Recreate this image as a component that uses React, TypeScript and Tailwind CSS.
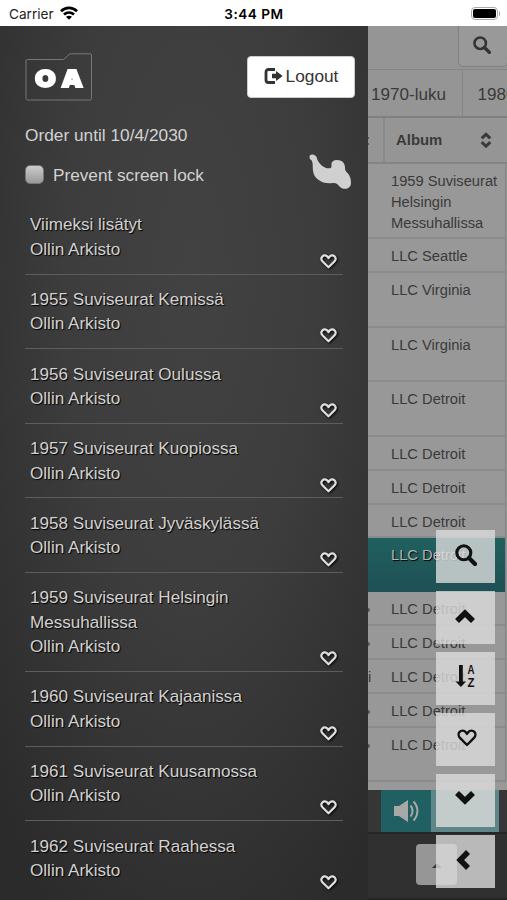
import type { ReactNode } from "react";

const albums = [
  { title: "Viimeksi lisätyt" },
  { title: "1955 Suviseurat Kemissä" },
  { title: "1956 Suviseurat Oulussa" },
  { title: "1957 Suviseurat Kuopiossa" },
  { title: "1958 Suviseurat Jyväskylässä" },
  { title: "1959 Suviseurat Helsingin Messuhallissa" },
  { title: "1960 Suviseurat Kajaanissa" },
  { title: "1961 Suviseurat Kuusamossa" },
  { title: "1962 Suviseurat Raahessa" },
];

const rows = [
  { album: "1959 Suviseurat Helsingin Messuhallissa", size: "h-[75.4px]", edge: "" },
  { album: "LLC Seattle", size: "h-[33.9px]", edge: "" },
  { album: "LLC Virginia", size: "h-[54.5px]", edge: "" },
  { album: "LLC Virginia", size: "h-[54.5px]", edge: "" },
  { album: "LLC Detroit", size: "h-[54.5px]", edge: "" },
  { album: "LLC Detroit", size: "h-[33.9px]", edge: "" },
  { album: "LLC Detroit", size: "h-[33.9px]", edge: "" },
  { album: "LLC Detroit", size: "h-[33.9px]", edge: "" },
  { album: "LLC Detroit", size: "h-[53.6px]", edge: "", active: true },
  { album: "LLC Detroit", size: "h-[33.9px]", edge: "dot" },
  { album: "LLC Detroit", size: "h-[33.9px]", edge: "dot" },
  { album: "LLC Detroit", size: "h-[33.9px]", edge: "i" },
  { album: "LLC Detroit", size: "h-[33.9px]", edge: "dot" },
  { album: "LLC Detroit", size: "h-[54.3px]", edge: "dot" },
];

function Heart({ className, stroke }: { className: string; stroke: number }) {
  return (
    <svg viewBox="0 0 20 18" className={className} fill="none" stroke="currentColor" strokeWidth={stroke}>
      <path d="M10 16 L3 8.9 C1.2 7 1.2 4.4 2.6 2.9 C4.3 1.1 7.2 1.3 8.6 3 L10 4.9 L11.4 3 C12.8 1.3 15.7 1.1 17.4 2.9 C18.8 4.4 18.8 7 17 8.9 Z" strokeLinejoin="round" />
    </svg>
  );
}

function Search({ className }: { className: string }) {
  return (
    <svg viewBox="0 0 22 22" className={className} fill="none" stroke="currentColor">
      <circle cx="8.8" cy="8.8" r="7" strokeWidth="3.1" />
      <path d="M14 14 L20 20" strokeWidth="4.2" strokeLinecap="round" />
    </svg>
  );
}

function Chevron({ className }: { className: string }) {
  return (
    <svg viewBox="0 0 20 14" className={className} fill="none" stroke="currentColor" strokeWidth="5.6">
      <path d="M2 12 L10 4.2 L18 12" />
    </svg>
  );
}

function ToolButton({ children }: { children: ReactNode }) {
  return (
    <button className="flex h-[52.5px] w-[59px] shrink-0 items-center justify-center bg-[#dcdcdc]/80 text-[#111]">
      {children}
    </button>
  );
}

function StatusBar() {
  return (
    <header className="grid h-[25.5px] shrink-0 grid-cols-3 items-center bg-white pl-[9px] pr-[7px] pt-[2px] font-['Inter',sans-serif] text-[13.6px] text-[#222]">
      <div className="flex items-center gap-[6px]">
        <span>Carrier</span>
        <svg viewBox="0 0 18 14" className="-mt-[2px] h-[14px] w-[18px]" fill="none" stroke="#000" strokeWidth="2.7">
          <path d="M1 5.2 C5.6 0.8 12.4 0.8 17 5.2" />
          <path d="M4 8.5 C7 5.8 11 5.8 14 8.5" />
          <path d="M9 13.8 L6 10.8 C7.8 9.3 10.2 9.3 12 10.8 Z" fill="#000" stroke="none" />
        </svg>
      </div>
      <span className="-ml-[1px] text-center font-semibold tracking-[0.5px] text-black">3:44 PM</span>
      <div className="-mt-px flex items-center justify-end gap-px">
        <div className="h-[13.5px] w-[27px] rounded-[4px] border border-[#aaa] p-[1px]">
          <div className="h-full rounded-[2px] bg-black" />
        </div>
        <div className="h-[5px] w-[1.5px] rounded-r bg-[#aaa]" />
      </div>
    </header>
  );
}

function Sidebar() {
  return (
    <aside className="h-full w-[368px] shrink-0 overflow-hidden bg-[radial-gradient(ellipse_75%_85%_at_52%_28%,#424242_0%,#3d3d3d_45%,#2b2b2b_100%)] pl-[25px] pr-[13px] text-[17.3px] text-[#d2d2d2]">
      <div className="flex h-[76px] items-start justify-between pt-[27.5px]">
        <div className="relative h-[48px] w-[67px]">
          <svg viewBox="0 0 67 48" className="absolute inset-0" fill="none" stroke="#777">
            <path d="M2.5 6.5 H38.5 L45 0.8 H65 Q66.5 0.8 66.5 2 V45.5 Q66.5 47 65 47 H2.5 Q1 47 1 45.5 V8 Q1 6.5 2.5 6.5 Z" />
          </svg>
          <div className="absolute left-[10px] top-[12px] flex origin-left scale-x-[1.14] gap-[5px] font-['Inter',sans-serif] text-[23.5px] font-black leading-[28px] text-white [-webkit-text-stroke:1.8px_white]">
            <span>O</span>
            <span>A</span>
          </div>
        </div>
        <button className="mt-[2.5px] flex h-[42px] w-[108px] items-center justify-center gap-[3px] rounded-[4px] border border-[#ccc] bg-white text-[17.3px] text-[#333]">
          <svg viewBox="0 0 19 16" className="-mt-px h-[16px] w-[19px]">
            <path d="M11 1.5 H4.5 Q2 1.5 2 4 V12 Q2 14.5 4.5 14.5 H11" fill="none" stroke="#333" strokeWidth="2.8" />
            <path d="M8 5.8 H12 V2.9 L18.7 8 L12 13.1 V10.2 H8 Z" fill="#333" />
          </svg>
          Logout
        </button>
      </div>

      <p className="mt-[21px] leading-[24px]">Order until 10/4/2030</p>
      <div className="mt-[4px] flex h-[50px] items-center justify-between pr-[4px]">
        <label className="flex items-center gap-[9px] text-[17.2px]">
          <span className="-mt-[2px] size-[19px] rounded-[5px] border border-[#777] bg-gradient-to-b from-[#ccc] to-[#999]" />
          Prevent screen lock
        </label>
        <svg viewBox="0 0 42 36" className="mt-[-8px] h-[36px] w-[42px]" fill="#d0d0d0">
          <path d="M0.5 3 C0.5 0.3 4 -0.2 6.5 1.8 C8.2 3.2 7.8 5 9 7 C11 10.5 13.5 12.5 17 14 C20 14.8 22.8 14.2 22.5 11.8 C22 7.8 24 6 28 6 C33 6 36 9 36 13.5 C36 16 36.5 17 38.5 19 C41 21.5 42 25 42 29 C42 35 34.5 37 30 32 C28 29.5 27 28.8 24 29 C14 30.8 5 25 4 17 C3.4 12.5 4.3 9.5 2.7 6.6 C1.5 5.5 0.5 5 0.5 3 Z" />
        </svg>
      </div>

      <ul className="mr-[12px] text-[17.1px]">
        {albums.map((album) => (
          <li
            key={album.title}
            className="flex items-end border-b border-[#5d5d5d] pb-[11.2px] pl-[5px] pt-[13.4px] leading-[24.5px] [text-shadow:1px_1px_1px_#000] first:-mt-[0.5px] last:border-transparent"
          >
            <div className="w-[240px]">
              <div>{album.title}</div>
              <div>Ollin Arkisto</div>
            </div>
            <Heart className="-mb-[6.4px] ml-auto mr-[6px] h-[15px] w-[17px] text-[#e0e0e0] drop-shadow-[1px_1px_1px_#000]" stroke={2.6} />
          </li>
        ))}
      </ul>
    </aside>
  );
}

function SongTable() {
  return (
    <main className="flex h-full min-w-0 flex-1 flex-col bg-[#959595] text-[#3a3a3a]">
      <div className="flex h-[44.5px] shrink-0 justify-end border-b border-[#858585]">
        <button className="-mr-px flex h-[41px] w-[50px] items-center justify-center rounded-b-[5px] border border-t-0 border-[#808080] bg-[#999] pb-[2px] pr-[2px]">
          <Search className="size-[18px] text-[#333]" />
        </button>
      </div>
      <div className="flex h-[48px] shrink-0 items-center overflow-hidden border-b-2 border-[#808080] text-[17.1px]">
        <div className="flex h-full w-[94.5px] shrink-0 items-center border-r border-[#858585] pl-[3px] pt-[4px]">1970-luku</div>
        <div className="shrink-0 pl-[15px] pt-[4px]">1980-luku</div>
      </div>
      <div className="flex h-[46px] shrink-0 items-center border-b-2 border-[#848484] text-[14.9px] font-bold">
        <div className="flex h-full w-[17px] items-center border-r-2 border-[#898989]">
          <span className="-ml-[3px]">:</span>
        </div>
        <span className="pl-[11px]">Album</span>
        <div className="ml-auto mr-[15px] flex flex-col gap-[2px]">
          <Chevron className="h-[7.5px] w-[12px]" />
          <Chevron className="h-[7.5px] w-[12px] rotate-180" />
        </div>
      </div>
      <div className="mr-[1px] shrink-0 border-r border-[#858585] text-[14.7px] leading-[20.8px]">
        {rows.map((row, i) => (
          <div
            key={i}
            className={`flex overflow-hidden pt-[7px] ${row.size} ${
              row.active
                ? "bg-gradient-to-b from-[#20605f] to-[#1f5055] text-[#b5b5b5] [text-shadow:1px_1px_1px_#000]"
                : "border-b-2 border-[#8b8b8b] bg-[#989898]"
            }`}
          >
            <div className="w-[23px] shrink-0">
              {row.edge === "i" && <span>i</span>}
              {row.edge === "dot" && <div className="mt-[9px] h-[4px] w-[1.5px] rounded-r bg-[#555]" />}
            </div>
            <div className="w-[112px] shrink-0">{row.album}</div>
          </div>
        ))}
      </div>
      <div className="h-[8px] shrink-0 bg-[#999]" />
      <div className="flex h-[42.5px] shrink-0 bg-[#363636] pl-[13px]">
        <div className="flex w-[50px] items-center justify-center bg-[#205f62]">
          <svg viewBox="0 0 26 24" className="h-[24px] w-[26px]" fill="none" stroke="#a8a8a8" strokeWidth="2">
            <path d="M1 7 H6 L15 1 V23 L6 17 H1 Z" fill="#a8a8a8" stroke="none" />
            <path d="M17.5 6.5 C20.2 9.6 20.2 14.4 17.5 17.5" />
            <path d="M20.5 2.5 C25.7 8 25.7 16 20.5 21.5" />
          </svg>
        </div>
        <div className="w-[68px] bg-[#5e8587]" />
      </div>
      <div className="flex-1 border-b-2 border-t-2 border-[#262626] bg-[#303030] pl-[48px] pt-[9.5px]">
        <div className="flex h-[41px] w-[41px] items-center justify-center rounded-[4px] bg-[#969696]">
          <svg viewBox="0 0 10 5" className="mt-[3px] h-[5px] w-[10px]">
            <path d="M0 5 L5 0 L10 5 Z" fill="#333" />
          </svg>
        </div>
      </div>
    </main>
  );
}

export default function App() {
  return (
    <div className="relative flex h-[900px] w-[507px] flex-col overflow-hidden font-['Liberation_Sans',Arial,sans-serif]">
      <StatusBar />
      <div className="flex min-h-0 flex-1">
        <Sidebar />
        <SongTable />
      </div>
      <div className="absolute left-[436px] top-[530px] flex flex-col gap-[8.5px]">
        <ToolButton>
          <Search className="-mt-[3px] size-[22px]" />
        </ToolButton>
        <ToolButton>
          <Chevron className="-ml-[2px] -mt-[3px] h-[14px] w-[20px]" />
        </ToolButton>
        <ToolButton>
          <svg viewBox="0 0 20 24" className="-mt-[4px] h-[24px] w-[20px] overflow-visible" fill="#111">
            <path d="M3 1 H6.8 V17.5 H10 L4.9 23 L-0.5 17.5 H3 Z" />
            <text x="11.5" y="10" fontSize="12.5" fontWeight="700" textLength="7" lengthAdjust="spacingAndGlyphs">A</text>
            <text x="11.5" y="22.8" fontSize="12.5" fontWeight="700" textLength="7" lengthAdjust="spacingAndGlyphs">Z</text>
          </svg>
        </ToolButton>
        <ToolButton>
          <Heart className="-mt-[3px] ml-[2px] h-[18px] w-[20px]" stroke={2.4} />
        </ToolButton>
        <ToolButton>
          <Chevron className="-ml-[2px] -mt-[4px] h-[14px] w-[20px] rotate-180" />
        </ToolButton>
        <ToolButton>
          <Chevron className="-ml-[5px] -mt-[2px] h-[14px] w-[20px] -rotate-90" />
        </ToolButton>
      </div>
    </div>
  );
}
